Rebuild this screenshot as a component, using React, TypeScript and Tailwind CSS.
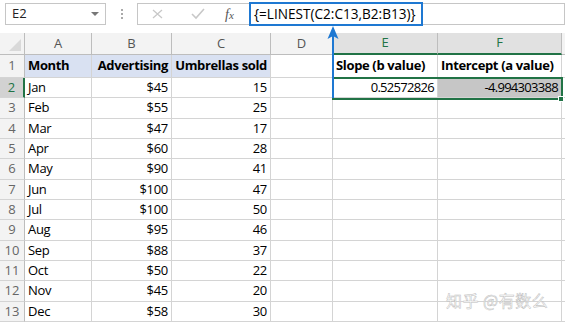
import React from "react";

const rows: [string, string, string][] = [
  ["Jan", "$45", "15"],
  ["Feb", "$55", "25"],
  ["Mar", "$47", "17"],
  ["Apr", "$60", "28"],
  ["May", "$90", "41"],
  ["Jun", "$100", "47"],
  ["Jul", "$100", "50"],
  ["Aug", "$95", "46"],
  ["Sep", "$88", "37"],
  ["Oct", "$50", "22"],
  ["Nov", "$45", "20"],
  ["Dec", "$58", "30"],
];

const font = { fontFamily: '"Open Sans", "Noto Sans", Arial, sans-serif' };

const cols = "grid-cols-[25px_67px_80px_99px_62px_105px_124px_3px]";

function RowHeader({ n, selected }: { n: number; selected?: boolean }) {
  return (
    <div
      className={
        "flex items-center justify-center border-b border-[#d4d4d4] text-[13px] " +
        (selected
          ? "bg-[#d2d2d2] text-[#217346] border-r-2 border-r-[#217346]"
          : "bg-[#f3f3f3] text-[#666] border-r border-r-[#bdbdbd]")
      }
    >
      {n}
    </div>
  );
}

function Cell({
  children,
  right,
  bold,
  className = "",
}: {
  children?: React.ReactNode;
  right?: boolean;
  bold?: boolean;
  className?: string;
}) {
  return (
    <div
      className={
        "flex items-center border-r border-b border-[#d4d4d4] px-[3px] text-[13px] text-black whitespace-nowrap overflow-visible " +
        (right ? "justify-end " : "") +
        (bold ? "font-bold tracking-[-0.35px] " : "tracking-[-0.3px] ") +
        className
      }
    >
      {children}
    </div>
  );
}

export default function App() {
  return (
    <div className="relative w-[565px] h-[322px] overflow-hidden bg-white" style={font}>
      {/* formula bar */}
      <div className="flex h-[33px] items-start pt-[3px]">
        <div className="ml-[5px] flex h-[22px] w-[101px] items-center justify-between border border-[#c6c6c6] pl-[6px] pr-[6px] text-[13px] text-[#222]">
          <span>E2</span>
          <span className="h-0 w-0 border-x-[4px] border-t-[4px] border-x-transparent border-t-[#777]" />
        </div>
        <div className="flex h-[22px] w-[31px] flex-col items-center justify-center gap-[2px]">
          <span className="h-[2px] w-[2px] bg-[#aaa]" />
          <span className="h-[2px] w-[2px] bg-[#aaa]" />
          <span className="h-[2px] w-[2px] bg-[#aaa]" />
        </div>
        <div className="flex h-[22px] w-[112px] items-center border border-r-0 border-[#c6c6c6]">
          <svg width="40" height="20" viewBox="0 0 40 20">
            <path d="M15 6 L24 14 M24 6 L15 14" stroke="#c8c8c8" strokeWidth="1.3" fill="none" />
          </svg>
          <svg width="40" height="20" viewBox="0 0 40 20">
            <path d="M14 10 L18 14 L26 5" stroke="#c8c8c8" strokeWidth="1.6" fill="none" />
          </svg>
          <span className="ml-[7px] text-[14px] italic text-[#555]" style={{ fontFamily: '"Liberation Serif", serif' }}>
            f<span className="text-[11px]">x</span>
          </span>
        </div>
        <div className="flex h-[22px] flex-1 items-center border border-[#c6c6c6]">
          <div className="ml-[-1px] flex h-[24px] w-[174px] items-center border-2 border-[#1e78d2] pl-[3px] text-[13.6px] text-black">
            {"{=LINEST(C2:C13,B2:B13)}"}
          </div>
        </div>
      </div>

      {/* grid */}
      <div className={"grid " + cols + " grid-rows-[22px_23px_repeat(12,20.33px)]"}>
        {/* header row */}
        <div className="relative border-r border-b border-[#bdbdbd] bg-[#f3f3f3]">
          <svg className="absolute bottom-[3px] right-[3px]" width="12" height="12" viewBox="0 0 12 12">
            <path d="M12 0 L12 12 L0 12 Z" fill="#d9d9d9" />
          </svg>
        </div>
        {["A", "B", "C", "D"].map((c) => (
          <div key={c} className="flex items-center justify-center border-r border-b border-[#bdbdbd] bg-[#f3f3f3] text-[13px] text-[#555]">
            {c}
          </div>
        ))}
        {["E", "F"].map((c) => (
          <div key={c} className="flex items-center justify-center border-r border-r-[#bdbdbd] border-b-2 border-b-[#217346] bg-[#e1e1e1] text-[13px] text-[#217346]">
            {c}
          </div>
        ))}
        <div className="border-b border-[#bdbdbd] bg-[#f3f3f3]" />

        {/* row 1 */}
        <RowHeader n={1} />
        <Cell bold className="bg-[#d9e1f2]">Month</Cell>
        <Cell bold right className="bg-[#d9e1f2]">Advertising</Cell>
        <Cell bold right className="bg-[#d9e1f2]">Umbrellas sold</Cell>
        <Cell />
        <Cell bold>Slope (b value)</Cell>
        <Cell bold>Intercept (a value)</Cell>
        <Cell />

        {rows.map((r, i) => (
          <React.Fragment key={r[0]}>
            <RowHeader n={i + 2} selected={i === 0} />
            <Cell>{r[0]}</Cell>
            <Cell right>{r[1]}</Cell>
            <Cell right>{r[2]}</Cell>
            <Cell />
            {i === 0 ? (
              <>
                <Cell right className="!tracking-[-0.7px]">0.52572826</Cell>
                <Cell right className="!tracking-[-0.7px] bg-[#c6c6c6]">-4.994303388</Cell>
              </>
            ) : (
              <>
                <Cell />
                <Cell />
              </>
            )}
            <Cell />
          </React.Fragment>
        ))}
      </div>

      {/* selection E2:F2 */}
      <div className="pointer-events-none absolute left-[332px] top-[77px] h-[23px] w-[231px] border-2 border-[#217346]" />
      <div className="absolute left-[558px] top-[96px] h-[6px] w-[6px] border border-white bg-[#217346]" />

      {/* blue arrow */}
      <svg className="absolute left-[326px] top-[26px]" width="14" height="72" viewBox="0 0 14 72">
        <path d="M7 4 L7 72" stroke="#1e78d2" strokeWidth="2" />
        <path d="M7 0 L12.5 13 L7 10 L1.5 13 Z" fill="#1e78d2" />
      </svg>

      {/* watermark */}
      <div
        className="absolute left-[446px] top-[288px] text-[16px] text-white"
        style={{
          fontFamily: '"Noto Sans CJK SC", sans-serif',
          WebkitTextStroke: "0.5px #bdbdbd",
          letterSpacing: "0.5px",
        }}
      >
        知乎 @有数么
      </div>
    </div>
  );
}
